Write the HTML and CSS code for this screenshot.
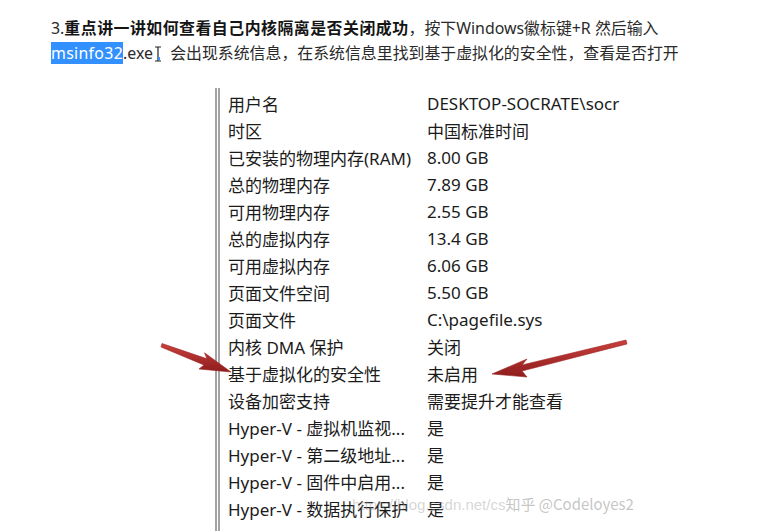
FILE: index.html
```html
<!DOCTYPE html>
<html lang="zh-CN">
<head>
<meta charset="utf-8">
<title>系统信息</title>
<link rel="stylesheet" href="styles.css">
</head>
<body>
<div class="page">
  <p class="intro">3.<b class="strong">重点讲一讲如何查看自己内核隔离是否关闭成功</b>，按下Windows徽标键+R 然后输入<br><span class="sel">msinfo32</span>.exe<svg class="ibeam" width="8" height="16" viewBox="0 0 8 16"><path d="M1 1h6M4 1v14M1 15h6" stroke="#222" stroke-width="1.2" fill="none"/><rect x="4" y="11" width="2" height="3" fill="#3390ff"/></svg> 会出现系统信息，在系统信息里找到基于虚拟化的安全性，查看是否打开</p>

  <div class="shot">
    <div class="info">
      <span class="k">用户名</span><span class="v">DESKTOP-SOCRATE\socr</span>
      <span class="k">时区</span><span class="v">中国标准时间</span>
      <span class="k">已安装的物理内存(RAM)</span><span class="v">8.00 GB</span>
      <span class="k">总的物理内存</span><span class="v">7.89 GB</span>
      <span class="k">可用物理内存</span><span class="v">2.55 GB</span>
      <span class="k">总的虚拟内存</span><span class="v">13.4 GB</span>
      <span class="k">可用虚拟内存</span><span class="v">6.06 GB</span>
      <span class="k">页面文件空间</span><span class="v">5.50 GB</span>
      <span class="k">页面文件</span><span class="v">C:\pagefile.sys</span>
      <span class="k">内核 DMA 保护</span><span class="v">关闭</span>
      <span class="k">基于虚拟化的安全性</span><span class="v">未启用</span>
      <span class="k">设备加密支持</span><span class="v">需要提升才能查看</span>
      <span class="k">Hyper-V - 虚拟机监视...</span><span class="v">是</span>
      <span class="k">Hyper-V - 第二级地址...</span><span class="v">是</span>
      <span class="k">Hyper-V - 固件中启用...</span><span class="v">是</span>
      <span class="k">Hyper-V - 数据执行保护</span><span class="v">是</span>
    </div>

    <svg class="arrows" width="781" height="531" viewBox="0 0 781 531">
      <defs>
        <linearGradient id="ag" x1="0" y1="0" x2="0" y2="1">
          <stop offset="0" stop-color="#c9403c"/>
          <stop offset="1" stop-color="#8e1d1d"/>
        </linearGradient>
      </defs>
      <g fill="url(#ag)" stroke="#9b2222" stroke-width="0.6" stroke-linejoin="round">
        <path d="M162 343.5 L207 358.8 L204.5 352.8 L231 372 L199 369 L204 365 L161 347 Z"/>
        <path d="M626 340 L522 365 L527 359 L492 374 L527 377 L522 371 L627 344 Z"/>
      </g>
    </svg>

    <div class="wm">https://blog.csdn.net/cs<span class="wm2">知乎 @Codeloyes2</span></div>
  </div>
</div>
</body>
</html>
```

FILE: styles.css
```css
html, body {
  margin: 0;
  padding: 0;
  background: #ffffff;
}

.page {
  width: 781px;
  height: 531px;
  overflow: hidden;
  position: relative;
  font-family: "Noto Sans", "Noto Sans CJK SC", sans-serif;
}

.intro {
  margin: 0;
  padding: 16px 0 0 51px;
  font-size: 15.9px;
  line-height: 25px;
  color: #2a2a2a;
}

.strong {
  font-weight: 700;
  color: #151515;
  letter-spacing: 0.5px;
}

.sel {
  background: #3390ff;
  color: #ffffff;
  letter-spacing: 0.3px;
}

.ibeam {
  vertical-align: -3px;
  margin: 0 4px 0 1px;
}

.shot {
  margin: 22px 0 0 215px;
  height: 460px;
}

.info {
  border-left: 5px double #a3a3a3;
  height: 100%;
  width: 416px;
  padding: 2px 0 0 8px;
  display: grid;
  grid-template-columns: 199px 209px;
  grid-auto-rows: 27px;
  align-items: center;
  font-size: 17px;
  color: #1b1b1b;
  overflow: hidden;
  box-sizing: border-box;
}

.k, .v {
  white-space: nowrap;
  overflow: hidden;
}

.arrows {
  position: absolute;
  left: 0;
  top: 0;
  pointer-events: none;
}

.wm {
  position: absolute;
  left: 352px;
  top: 493px;
  font-family: "Liberation Sans", "Noto Sans CJK SC", sans-serif;
  font-size: 15px;
  color: rgba(150, 150, 150, 0.4);
  white-space: nowrap;
}

.wm2 {
  font-family: "Noto Sans CJK SC", sans-serif;
  color: rgba(140, 140, 140, 0.5);
}
```
